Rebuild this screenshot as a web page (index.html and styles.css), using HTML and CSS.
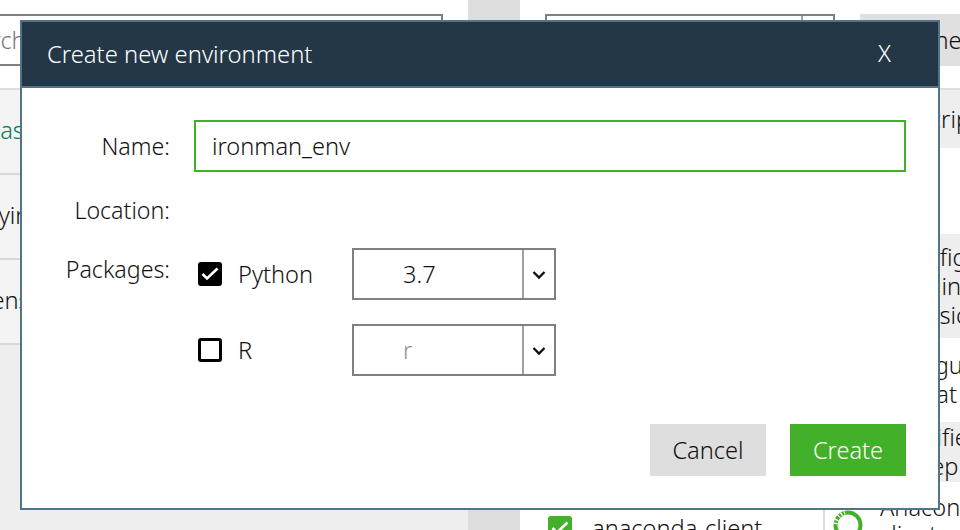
FILE: index.html
```html
<!DOCTYPE html>
<html lang="en">
  <head>
    <meta charset="UTF-8" />
    <meta name="viewport" content="width=device-width, initial-scale=1.0" />
    <title>Create new environment</title>
    <link rel="stylesheet" href="styles.css">
  </head>
  <body>
    <!-- page behind the dialog -->
    <div class="page">
      <div class="envs">
        <div class="envs-top">
          <div class="search"><span class="search-text">Search Environments</span></div>
        </div>
        <ul class="env-list">
          <li class="env env-active"><span>base (root)</span></li>
          <li class="env"><span>flying</span></li>
          <li class="env"><span>lens</span></li>
        </ul>
      </div>
      <div class="gutter"></div>
      <div class="pkgs">
        <div class="pkgs-top">
          <div class="filter"><span class="filter-arrow"></span></div>
          <div class="channels">Channels</div>
        </div>
        <div class="pkg-table">
          <div class="pkg-row shade"><div class="desc desc-head">Description</div></div>
          <div class="pkg-row"></div>
          <div class="pkg-row shade"><div class="desc">A config<br>Tools in<br>extension</div></div>
          <div class="pkg-row"><div class="desc">To vague<br>Format</div></div>
          <div class="pkg-row shade"><div class="desc">Identifier<br>Interep</div></div>
          <div class="pkg-row pkg-last">
            <div class="pkg-name">
              <span class="tick tick-green">
                <svg viewBox="0 0 24 24" width="24" height="24"><polyline points="4.5,12 9,16.5 19.5,6.5" /></svg>
              </span>
              <span>anaconda-client</span>
            </div>
            <div class="desc-cell">
              <svg class="ring" viewBox="0 0 30 30" width="30" height="30">
                <circle class="ring-main" cx="15" cy="15" r="12.5" />
                <circle class="ring-dots" cx="15" cy="15" r="12.5" />
              </svg>
              <div class="desc">Anaconda<br>client</div>
            </div>
          </div>
        </div>
      </div>
    </div>

    <div class="dialog">
      <div class="dialog-head">
        <span class="dialog-title">Create new environment</span>
        <span class="dialog-close">X</span>
      </div>
      <div class="dialog-body">
        <div class="form">
          <label class="form-label form-label-name">Name:</label>
          <input class="name-input" type="text" value="ironman_env" />
          <label class="form-label form-label-location">Location:</label>
          <div></div>
          <label class="form-label form-label-packages">Packages:</label>
          <div class="pkg-options">
            <div class="pkg-option">
              <span class="tick tick-on">
                <svg viewBox="0 0 24 24" width="24" height="24"><polyline points="4.5,12 9,16.5 19.5,6.5" /></svg>
              </span>
              <span class="pkg-option-name">Python</span>
              <div class="select">
                <span class="select-value">3.7</span>
                <span class="select-btn">
                  <svg viewBox="0 0 14 10" width="14" height="10"><polyline points="1.5,2 7,7.5 12.5,2" /></svg>
                </span>
              </div>
            </div>
            <div class="pkg-option">
              <span class="tick"></span>
              <span class="pkg-option-name">R</span>
              <div class="select">
                <span class="select-value select-value-dim">r</span>
                <span class="select-btn">
                  <svg viewBox="0 0 14 10" width="14" height="10"><polyline points="1.5,2 7,7.5 12.5,2" /></svg>
                </span>
              </div>
            </div>
          </div>
        </div>
        <div class="dialog-btns">
          <button class="btn btn-cancel">Cancel</button>
          <button class="btn btn-create">Create</button>
        </div>
      </div>
    </div>
  </body>
</html>
```

FILE: styles.css
```css
* {
  margin: 0;
  padding: 0;
  box-sizing: border-box;
}
html,
body {
  height: 100%;
  overflow: hidden;
}
body {
  font-family: "Noto Sans", "Open Sans", sans-serif;
  font-size: 23.6px;
  font-weight: 300;
  color: #111;
  background: #fff;
}
.page {
  display: grid;
  grid-template-columns: 468px 52px 1fr;
  height: 530px;
}

/* left column */
.envs {
  display: flex;
  flex-direction: column;
  background: #eee;
  overflow: hidden;
}
.envs-top {
  height: 88px;
  padding-top: 14px;
  padding-right: 25px;
  background: #fff;
}
.search {
  height: 52px;
  border-top: 2px solid #808080;
  border-right: 2px solid #808080;
  border-bottom: 2px solid #808080;
  display: flex;
  align-items: center;
  color: #777;
  white-space: nowrap;
  overflow: hidden;
}
.search-text {
  margin-left: -47px;
}
.env-list {
  list-style: none;
  border-top: 2px solid #ddd;
}
.env {
  height: 85px;
  padding-bottom: 3px;
  background: #f4f4f4;
  border-bottom: 2px solid #d8d8d8;
  display: flex;
  align-items: center;
  white-space: nowrap;
  overflow: hidden;
}
.env span {
  margin-left: -14px;
}
.env-active {
  color: #007a5a;
}
.gutter {
  background: #ddd;
}

/* right column */
.pkgs {
  display: flex;
  flex-direction: column;
  overflow: hidden;
}
.pkgs-top {
  height: 88px;
  padding: 14px 0 0 25px;
  display: flex;
  gap: 25px;
}
.filter {
  flex: none;
  width: 290px;
  height: 52px;
  border: 2px solid #808080;
  display: flex;
  justify-content: flex-end;
}
.filter-arrow {
  width: 32px;
  border-left: 2px solid #a0a0a0;
}
.channels {
  flex: 1;
  height: 52px;
  background: #e0e0e0;
  padding-left: 19px;
  line-height: 52px;
  white-space: nowrap;
}
.pkg-table {
  flex: 1;
  display: grid;
  grid-template-rows: 60px 86px 104px 84px 60px 48px;
  overflow: hidden;
}
.pkg-row {
  display: flex;
  align-items: center;
  padding-left: 360px;
  white-space: nowrap;
}
.pkg-row:first-child {
  border-top: 2px solid #ddd;
}
.shade {
  background: #eee;
}
.desc {
  line-height: 29px;
}
.desc-head {
  padding-left: 9px;
}
.pkg-last {
  padding-left: 28px;
  align-items: flex-start;
}
.pkg-name {
  width: 275px;
  display: flex;
  align-items: center;
  gap: 20px;
  margin-top: 30px;
}
.desc-cell {
  display: flex;
  gap: 17px;
  height: 48px;
  padding-left: 8px;
  border-left: 2px solid #ddd;
}
.ring {
  flex: none;
  margin-top: 28px;
}
.desc-cell .desc {
  margin-top: 12px;
  line-height: 27px;
}
.ring-main,
.ring-dots {
  fill: none;
  stroke: #43b02a;
  stroke-width: 4;
}
.ring-dots {
  stroke: #fff;
  stroke-width: 4;
  stroke-dasharray: 1.5 2 1.5 3 1 2 1.5 2 1 90;
  stroke-dashoffset: -40;
}

/* checkboxes */
.tick {
  flex: none;
  width: 24px;
  height: 24px;
  border: 3px solid #000;
  border-radius: 3px;
  display: block;
  background: #fff;
}
.tick svg {
  display: block;
  fill: none;
  stroke: #fff;
  stroke-width: 2.6;
}
.tick-on,
.tick-green {
  border: 0;
}
.tick-on {
  background: #000;
}
.tick-green {
  background: #43b02a;
}

/* dialog */
.dialog {
  position: absolute;
  left: 20px;
  top: 20px;
  width: 920px;
  height: 490px;
  background: #fff;
  border: 2px solid #527488;
  display: flex;
  flex-direction: column;
}
.dialog-head {
  height: 66px;
  flex: none;
  background: #243746;
  border-bottom: 2px solid #527488;
  color: #fff;
  display: flex;
  align-items: center;
  justify-content: space-between;
  padding: 0 47px 0 25px;
}
.dialog-title {
  font-size: 23.8px;
}
.dialog-close {
  margin-top: -3px;
}
.dialog-body {
  flex: 1;
  padding: 32px 32px 0 0;
}
.form {
  display: grid;
  grid-template-columns: 148px 1fr;
  grid-template-rows: 52px 76px auto;
  column-gap: 24px;
}
.form-label {
  text-align: right;
  font-size: 23.2px;
}
.form-label-name {
  line-height: 52px;
}
.form-label-location {
  line-height: 26px;
  padding-top: 25px;
}
.form-label-packages {
  line-height: 42px;
}
.name-input {
  width: 100%;
  height: 52px;
  border: 2px solid #43b02a;
  outline: none;
  padding: 0 16px;
  font: inherit;
  color: inherit;
}
.pkg-options {
  padding-left: 4px;
  display: flex;
  flex-direction: column;
  gap: 24px;
}
.pkg-option {
  display: flex;
  align-items: center;
}
.pkg-option-name {
  width: 130px;
  padding-left: 16px;
  flex: none;
}
.select {
  width: 204px;
  height: 52px;
  border: 2px solid #808080;
  display: flex;
}
.select-value {
  flex: 1;
  padding-left: 49px;
  line-height: 48px;
}
.select-value-dim {
  color: #9a8a90;
}
.select-btn {
  width: 32px;
  border-left: 2px solid #a0a0a0;
  display: flex;
  align-items: center;
  justify-content: center;
  padding-top: 2px;
}
.select-btn svg {
  fill: none;
  stroke: #111;
  stroke-width: 2.4;
}
.dialog-btns {
  margin-top: 48px;
  display: flex;
  justify-content: flex-end;
  gap: 24px;
}
.btn {
  width: 116px;
  height: 52px;
  border: 0;
  font: inherit;
}
.btn-cancel {
  background: #dedede;
  color: #111;
}
.btn-create {
  background: #43b02a;
  color: #fff;
}
```
